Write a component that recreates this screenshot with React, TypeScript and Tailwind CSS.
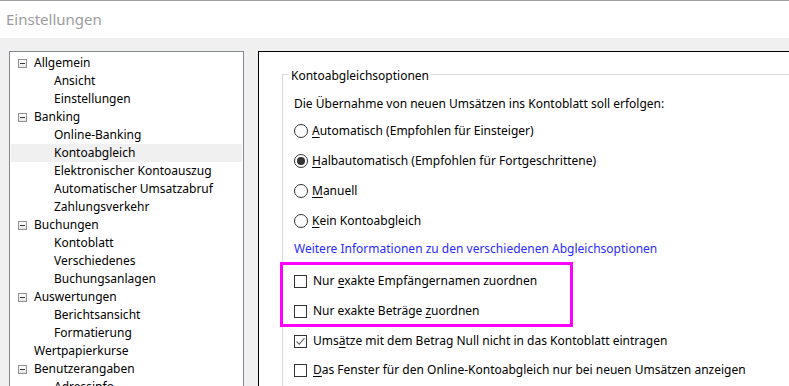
import React from "react";

type Node = { label: string; level: 0 | 1; box?: boolean; selected?: boolean };

const tree: Node[] = [
  { label: "Allgemein", level: 0, box: true },
  { label: "Ansicht", level: 1 },
  { label: "Einstellungen", level: 1 },
  { label: "Banking", level: 0, box: true },
  { label: "Online-Banking", level: 1 },
  { label: "Kontoabgleich", level: 1, selected: true },
  { label: "Elektronischer Kontoauszug", level: 1 },
  { label: "Automatischer Umsatzabruf", level: 1 },
  { label: "Zahlungsverkehr", level: 1 },
  { label: "Buchungen", level: 0, box: true },
  { label: "Kontoblatt", level: 1 },
  { label: "Verschiedenes", level: 1 },
  { label: "Buchungsanlagen", level: 1 },
  { label: "Auswertungen", level: 0, box: true },
  { label: "Berichtsansicht", level: 1 },
  { label: "Formatierung", level: 1 },
  { label: "Wertpapierkurse", level: 0 },
  { label: "Benutzerangaben", level: 0, box: true },
  { label: "Adressinfo", level: 1 },
];

function Minus() {
  return (
    <span className="flex h-[9px] w-[9px] items-center justify-center border border-[#919191] bg-gradient-to-b from-white to-[#e6e6e6]">
      <span className="h-px w-[5px] bg-[#3a3a3a]" />
    </span>
  );
}

function Label({ pre, key1, post }: { pre?: string; key1: string; post: string }) {
  return (
    <span>
      {pre}
      <span className="underline underline-offset-2">{key1}</span>
      {post}
    </span>
  );
}

function Radio({ checked, children }: { checked?: boolean; children: React.ReactNode }) {
  return (
    <div className="flex h-[30px] items-center gap-[4px]">
      <span className="flex h-[14px] w-[14px] items-center justify-center rounded-full border border-[#333] bg-white">
        {checked && <span className="h-[8px] w-[8px] rounded-full bg-[#333]" />}
      </span>
      {children}
    </div>
  );
}

function Check({ checked, h, children }: { checked?: boolean; h: string; children: React.ReactNode }) {
  return (
    <div className={`flex items-center gap-[6px] ${h}`}>
      <span className="flex h-[13px] w-[13px] items-center justify-center border border-[#333] bg-white">
        {checked && (
          <svg width="11" height="11" viewBox="0 0 11 11">
            <path d="M1.5 5.5 L4.2 8.2 L9.5 2.2" fill="none" stroke="#666" strokeWidth="1.1" />
          </svg>
        )}
      </span>
      {children}
    </div>
  );
}

export default function App() {
  return (
    <div
      className="flex h-[386px] w-[789px] flex-col overflow-hidden bg-[#f0f0f0] text-[12px] text-black"
      style={{ fontFamily: '"Noto Sans", "Open Sans", sans-serif' }}
    >
      <div className="flex h-[38px] shrink-0 items-center border-t border-[#a0a0a0] bg-white pl-[6px]">
        <span className="text-[15px] text-[#9c9c9c]">Einstellungen</span>
      </div>

      <div className="flex flex-1 gap-[14px] pl-[9px] pt-[13px]">
        <div className="w-[235px] shrink-0 border border-[#828790] bg-white pt-[2px]">
          {tree.map((n) => (
            <div
              key={n.label}
              className={`flex h-[18px] items-center ${n.selected ? "mx-px bg-[#f0f0f0]" : ""}`}
            >
              <div className={n.level === 0 ? "flex items-center gap-[7px] pl-[8px]" : "pl-[44px]"}>
                {n.level === 0 && (n.box ? <Minus /> : <span className="w-[9px]" />)}
                <span className={n.selected ? "-ml-px" : ""}>{n.label}</span>
              </div>
            </div>
          ))}
        </div>

        <div className="flex-1 border-l border-t border-black bg-white pl-[23px] pt-[22px]">
          <div className="relative h-full border-l border-t border-[#dcdcdc] pl-[11px] pt-[16px]">
            <span className="absolute -top-[7px] left-[6px] bg-white px-[2px] leading-[16px]">
              Kontoabgleichsoptionen
            </span>
            <div className="flex h-[25px] items-center">Die Übernahme von neuen Umsätzen ins Kontoblatt soll erfolgen:</div>
            <Radio>
              <Label key1="A" post="utomatisch (Empfohlen für Einsteiger)" />
            </Radio>
            <Radio checked>
              <Label key1="H" post="albautomatisch (Empfohlen für Fortgeschrittene)" />
            </Radio>
            <Radio>
              <Label key1="M" post="anuell" />
            </Radio>
            <Radio>
              <Label key1="K" post="ein Kontoabgleich" />
            </Radio>
            <div className="flex h-[26px] items-center text-[#2b2bff]">
              Weitere Informationen zu den verschiedenen Abgleichsoptionen
            </div>
            <div className="-ml-[14px] h-[65px] w-[293px] border-[3px] border-[#ff00ff] pl-[11px] pt-px">
              <Check h="h-[30px]">
                <Label pre="Nur " key1="e" post="xakte Empfängernamen zuordnen" />
              </Check>
              <Check h="h-[30px]">
                <Label pre="Nur exakte Beträge " key1="z" post="uordnen" />
              </Check>
            </div>
            <Check checked h="h-[28px]">
              <Label pre="Ums" key1="ä" post="tze mit dem Betrag Null nicht in das Kontoblatt eintragen" />
            </Check>
            <Check h="h-[30px]">
              <Label key1="D" post="as Fenster für den Online-Kontoabgleich nur bei neuen Umsätzen anzeigen" />
            </Check>
          </div>
        </div>
      </div>
    </div>
  );
}
